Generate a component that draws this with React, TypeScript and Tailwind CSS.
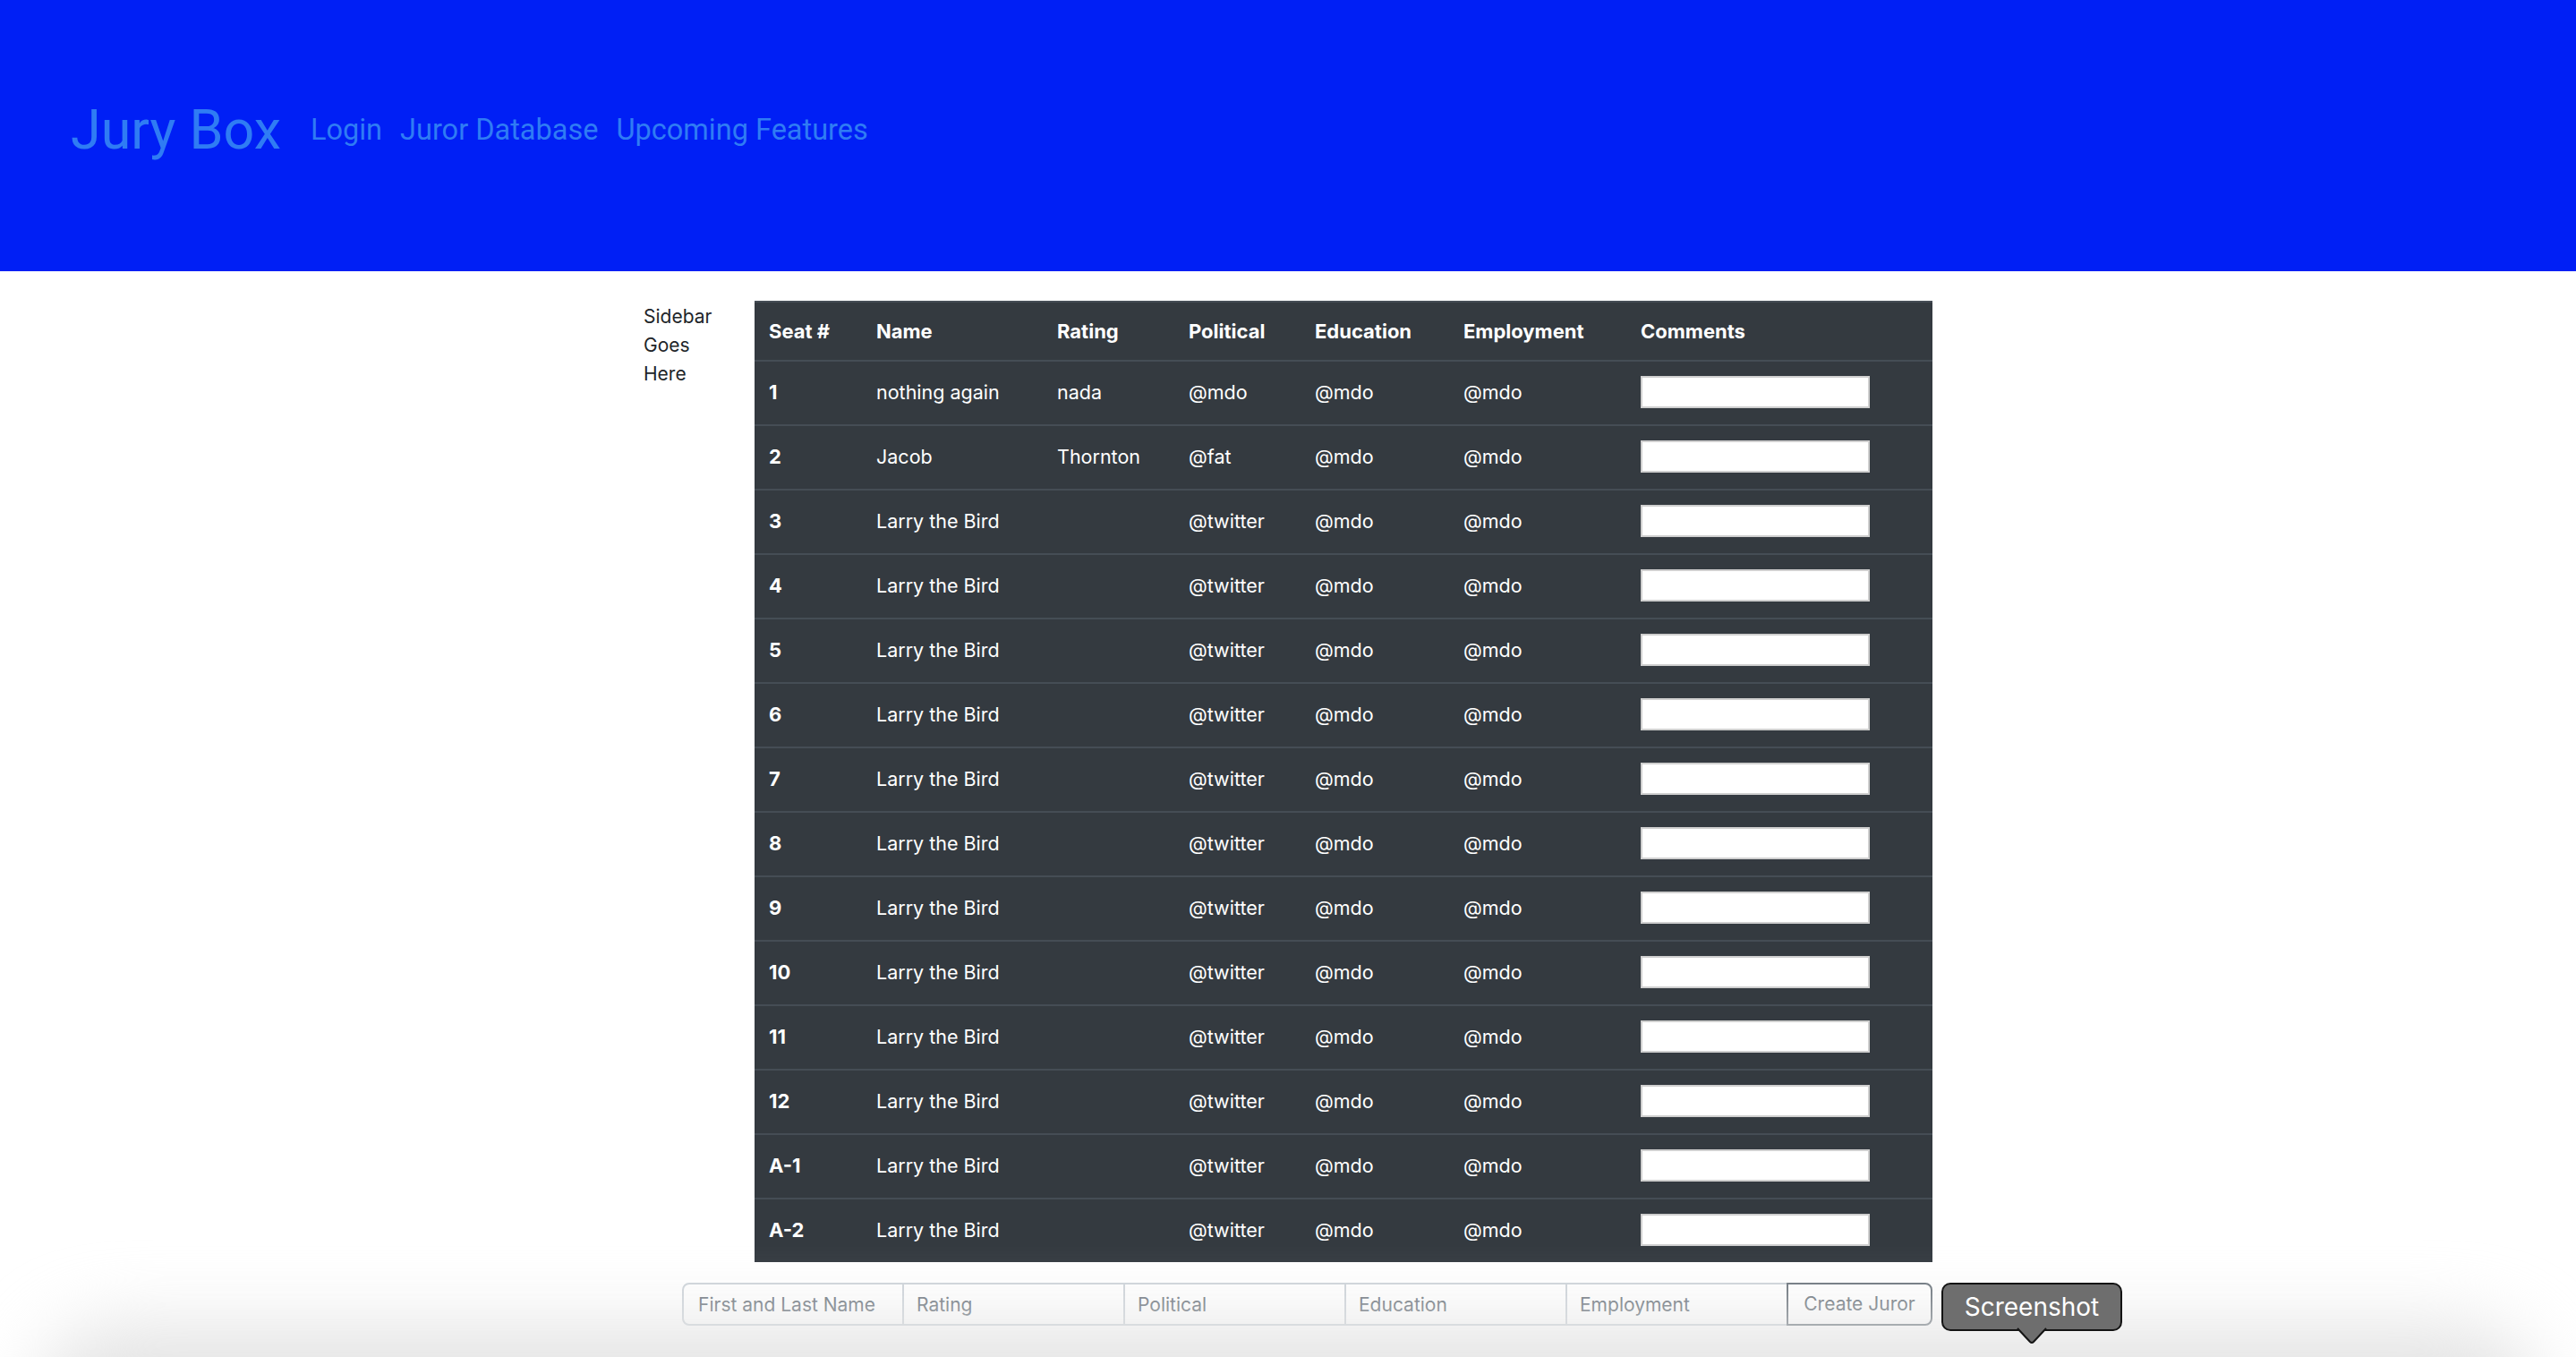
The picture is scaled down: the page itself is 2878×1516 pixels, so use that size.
import React from "react";

interface Juror {
  seat: string;
  name: string;
  rating: string;
  political: string;
  education: string;
  employment: string;
}

const larrySeats = ["3", "4", "5", "6", "7", "8", "9", "10", "11", "12", "A-1", "A-2"];

const jurors: Juror[] = [
  { seat: "1", name: "nothing again", rating: "nada", political: "@mdo", education: "@mdo", employment: "@mdo" },
  { seat: "2", name: "Jacob", rating: "Thornton", political: "@fat", education: "@mdo", employment: "@mdo" },
  ...larrySeats.map((seat) => ({
    seat,
    name: "Larry the Bird",
    rating: "",
    political: "@twitter",
    education: "@mdo",
    employment: "@mdo",
  })),
];

const columns = [
  { label: "Seat #", width: "w-[120px]" },
  { label: "Name", width: "w-[202px]" },
  { label: "Rating", width: "w-[147px]" },
  { label: "Political", width: "w-[141px]" },
  { label: "Education", width: "w-[166px]" },
  { label: "Employment", width: "w-[198px]" },
  { label: "Comments", width: "w-[342px]" },
];

const formFields = ["First and Last Name", "Rating", "Political", "Education", "Employment"];

const cellClass = "h-[72px] border-t-2 border-[#454d55] px-4 pt-0 pb-[2px] align-middle";

const ScreenshotBubble: React.FC = () => (
  <div className="relative z-20 ml-[10px] flex h-[54px] w-[202px] shrink-0 items-center justify-center rounded-[10px] border-2 border-[#141414] bg-[#6e6e6e] text-[28px] text-white font-['Inter',sans-serif]">
    Screenshot
    <svg
      className="absolute left-1/2 top-full -translate-x-1/2 -mt-[2px]"
      width="34"
      height="18"
      viewBox="0 0 34 18"
    >
      <path d="M1 1 L15 16 Q17 18 19 16 L33 1" fill="#6e6e6e" stroke="#141414" strokeWidth="2" />
      <rect x="3" y="0" width="28" height="2" fill="#6e6e6e" />
    </svg>
  </div>
);

export default function App() {
  return (
    <div className="relative h-[1516px] overflow-hidden bg-white">
      <header className="h-[303px] bg-[#001ff5] pl-[79px] pt-[100px] font-['Roboto',sans-serif] text-[#2f7cf4]">
        <nav className="flex items-center">
          <a href="#" className="mr-[33px] text-[61px] leading-normal">
            Jury Box
          </a>
          <div className="flex gap-[20px] text-[32.5px] leading-normal">
            <a href="#">Login</a>
            <a href="#">Juror Database</a>
            <a href="#">Upcoming Features</a>
          </div>
        </nav>
      </header>

      <main className="mx-auto mt-[33px] w-[1440px] font-['Inter',sans-serif]">
        <div className="flex">
          <aside className="w-[124px] pt-[2px] text-[21px] leading-[32px] text-[#212529]">
            Sidebar
            <br />
            Goes
            <br />
            Here
          </aside>
          <table className="w-[1316px] table-fixed border-separate border-spacing-0 bg-[#343a40] text-left text-[21.5px] text-white">
            <thead>
              <tr>
                {columns.map((col) => (
                  <th
                    key={col.label}
                    className={`${col.width} h-[66px] border-t-2 border-[#454d55] px-4 py-0 align-middle text-[22px] font-bold`}
                  >
                    {col.label}
                  </th>
                ))}
              </tr>
            </thead>
            <tbody>
              {jurors.map((j) => (
                <tr key={j.seat}>
                  <th className={`${cellClass} text-[22px] font-bold`}>{j.seat}</th>
                  <td className={cellClass}>{j.name}</td>
                  <td className={cellClass}>{j.rating}</td>
                  <td className={cellClass}>{j.political}</td>
                  <td className={cellClass}>{j.education}</td>
                  <td className={cellClass}>{j.employment}</td>
                  <td className={cellClass}>
                    <input
                      type="text"
                      className="block h-[36px] w-[256px] border-2 border-[#cfcfcf] bg-white"
                    />
                  </td>
                </tr>
              ))}
            </tbody>
          </table>
        </div>

        <div className="ml-[43px] mt-[23px] flex items-start">
          <div className="flex h-[48px] shrink-0">
            {formFields.map((f, i) => (
              <input
                key={f}
                type="text"
                placeholder={f}
                className={
                  i === 0
                    ? "h-[48px] w-[248px] rounded-l-[8px] border-2 border-[#ced4da] bg-white px-[16px] text-[21px] text-[#495057] placeholder:text-[#6c757d]"
                    : "h-[48px] w-[247px] border-2 border-l-0 border-[#ced4da] bg-white px-[14px] text-[21px] text-[#495057] placeholder:text-[#6c757d]"
                }
              />
            ))}
            <button className="-ml-[2px] h-[48px] w-[163px] rounded-r-[8px] border-2 border-[#6c757d] bg-white text-[21px] text-[#6c757d]">
              Create Juror
            </button>
          </div>
          <ScreenshotBubble />
        </div>
      </main>

      {/* soft shadow from the capture overlay at the bottom */}
      <div className="pointer-events-none absolute left-[40px] right-[40px] top-[1480px] z-10 h-[180px] rounded-[90px] bg-[#e4e4e4] blur-[40px]" />
    </div>
  );
}
